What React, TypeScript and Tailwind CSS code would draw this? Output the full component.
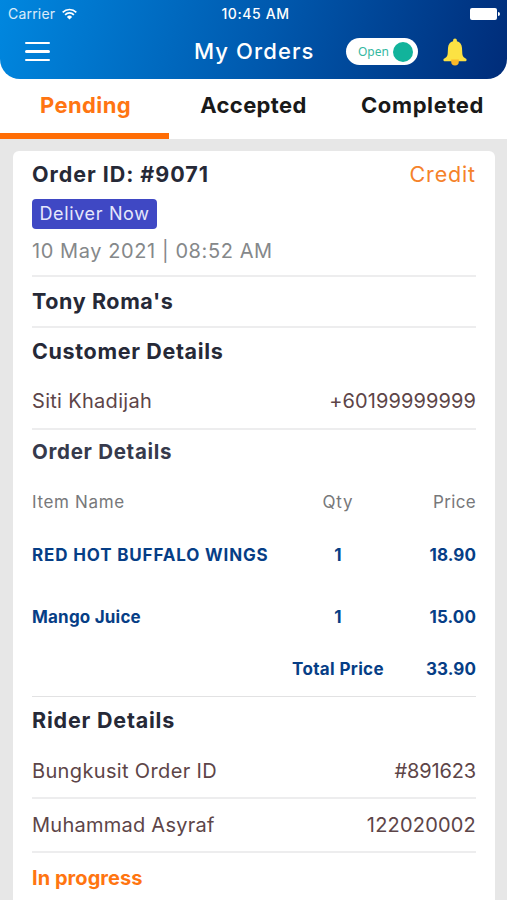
import { useState } from 'react'
import clsx from 'clsx'

interface OrderItem {
  name: string
  qty: number
  price: string
  nameClass: string
}

const TABS = [
  { label: 'Pending', tracking: 'tracking-[0.4px] pl-[2px]' },
  { label: 'Accepted', tracking: 'tracking-[0.35px]' },
  { label: 'Completed', tracking: 'tracking-[0.6px]' },
]

const ITEMS: OrderItem[] = [
  { name: 'RED HOT BUFFALO WINGS', qty: 1, price: '18.90', nameClass: 'tracking-[0.85px]' },
  { name: 'Mango Juice', qty: 1, price: '15.00', nameClass: 'tracking-[0.2px]' },
]

function StatusBar() {
  return (
    <div className="flex h-[27px] items-center justify-between pl-2 pr-[7px] text-[14px]">
      <div className="flex w-[163px] items-center gap-[7px]">
        <span className="tracking-[0.2px] text-white/85">Carrier</span>
        <svg width="15" height="12" viewBox="0 0 15 12" fill="none" stroke="white" strokeWidth="1.7">
          <path d="M0.7 4.3a9.6 9.6 0 0 1 13.6 0" />
          <path d="M3.1 6.8a6.2 6.2 0 0 1 8.8 0" />
          <path d="M7.5 11.6 4.9 8.9a3.7 3.7 0 0 1 5.2 0Z" fill="white" stroke="none" />
        </svg>
      </div>
      <span className="font-medium tracking-[0.6px]">10:45 AM</span>
      <div className="flex w-40 items-center justify-end gap-px">
        <div className="h-3 w-[27px] rounded-[2px] bg-white" />
        <div className="h-1 w-[2px] rounded-r-full bg-white" />
      </div>
    </div>
  )
}

function BellIcon() {
  return (
    <svg width="24" height="28" viewBox="0 0 24 28">
      <path
        d="M12 .5c-1.1 0-1.9.8-1.9 1.9v.9C7 4 5.2 6.6 5 10l-.3 5.5c-.1 2.2-1 3.7-2.6 4.6-1.1.6-1.7 1-1.7 1.8 0 .9.7 1.4 1.7 1.4h19.8c1 0 1.7-.5 1.7-1.4 0-.8-.6-1.2-1.7-1.8-1.6-.9-2.5-2.4-2.6-4.6L19 10c-.2-3.4-2-6-5.1-6.7v-.9C13.9 1.3 13.1.5 12 .5Z"
        fill="#fce243"
      />
      <path d="M8.2 21.5h7.6v2.2a3.8 3.8 0 0 1-7.6 0Z" fill="#fbb828" />
    </svg>
  )
}

function Header() {
  const [open, setOpen] = useState(true)

  return (
    <header className="h-[79px] rounded-b-[20px] bg-[linear-gradient(105deg,#0087df_0%,#0059ae_52%,#002c79_100%)] text-white">
      <StatusBar />
      <div className="flex h-[49px] items-center pl-[25px]">
        <button className="flex w-[25px] flex-col gap-[6px]" aria-label="Menu">
          <span className="h-[2.5px] rounded-full bg-white" />
          <span className="h-[2.5px] rounded-full bg-white" />
          <span className="h-[2.5px] rounded-full bg-white" />
        </button>
        <h1 className="ml-[144px] w-[152px] whitespace-nowrap text-[22px] font-medium tracking-[1.1px]">My Orders</h1>
        <button
          onClick={() => setOpen(!open)}
          className="flex h-[27px] w-[72px] items-center justify-between rounded-full bg-white pl-3 pr-[5px]"
        >
          <span className="font-['Noto_Sans',sans-serif] text-[12px] text-[#35b89f]">{open ? 'Open' : 'Closed'}</span>
          <span className="size-5 rounded-full bg-[#12b39b]" />
        </button>
        <button className="ml-[25px]" aria-label="Notifications">
          <BellIcon />
        </button>
      </div>
    </header>
  )
}

function Divider({ thin }: { thin?: boolean }) {
  return <div className={clsx('shrink-0', thin ? 'h-px bg-[#e2e2e3]' : 'h-[2px] bg-[#ededee]')} />
}

export default function App() {
  const [tab, setTab] = useState('Pending')

  return (
    <div className="h-[900px] w-[507px] overflow-hidden bg-[#e7e7e7] font-['Inter',sans-serif]">
      <div className="bg-white">
        <Header />
        <nav className="grid h-[60px] grid-cols-3">
          {TABS.map(({ label, tracking }) => (
            <button
              key={label}
              onClick={() => setTab(label)}
              className={clsx(
                'flex justify-center border-b-[6px] pt-[10px] text-[22px] leading-8 font-bold',
                tracking,
                tab === label ? 'border-[#ff6d05] text-[#ff7512]' : 'border-transparent text-[#191919]',
              )}
            >
              {label}
            </button>
          ))}
        </nav>
      </div>

      <main className="mr-3 ml-[13px] mt-3 h-[780px] rounded-md bg-white px-[19px] text-[20px] text-[#5d4548]">
        <div className="flex h-[46px] items-center justify-between">
          <h2 className="text-[21.5px] font-bold tracking-[0.95px] text-[#262937]">Order ID: #9071</h2>
          <span className="text-[21.5px] tracking-[0.85px] text-[#f5822a]">Credit</span>
        </div>
        <div className="mt-[2px] flex h-[30px] w-[125px] items-center justify-center rounded-[4px] bg-[#3f48c4] pb-px text-[18px] tracking-[0.65px] text-[#e6e7fb]">
          Deliver Now
        </div>
        <div className="flex h-[46px] items-center pb-[2px] text-[20px] tracking-[0.58px] text-[#85888a]">10 May 2021 | 08:52 AM</div>
        <Divider />
        <h2 className="flex h-[49px] items-center text-[21.5px] font-bold tracking-[0.6px] text-[#262937]">Tony Roma's</h2>
        <Divider />

        <h2 className="flex h-[47px] items-center text-[21.5px] font-bold tracking-[0.65px] text-[#262937]">Customer Details</h2>
        <div className="flex h-[53px] items-center justify-between pb-px">
          <span className="tracking-[0.3px]">Siti Khadijah</span>
          <span className="tracking-[0.1px]">+60199999999</span>
        </div>
        <Divider />

        <h2 className="flex h-[44px] items-center text-[20.5px] font-bold tracking-[0.7px] text-[#363a4c]">Order Details</h2>
        <div className="mt-[8px] flex h-[43px] items-center pb-px text-[17px] text-[#77787a]">
          <span className="flex-1 tracking-[0.65px]">Item Name</span>
          <span className="w-[60px] text-center tracking-[0.9px]">Qty</span>
          <span className="w-[108px] text-right tracking-[0.35px]">Price</span>
        </div>
        {ITEMS.map((item) => (
          <div key={item.name} className="flex h-[62px] items-center text-[17px] font-bold text-[#063e86]">
            <span className={clsx('flex-1 whitespace-nowrap', item.nameClass)}>{item.name}</span>
            <span className="w-[60px] text-center">{item.qty}</span>
            <span className="w-[108px] text-right tracking-[0.1px]">{item.price}</span>
          </div>
        ))}
        <div className="mb-[4px] flex h-[43px] items-center pb-px text-[17px] font-bold text-[#063e86]">
          <span className="flex-1 pr-[42px] text-right tracking-[0.35px]">Total Price</span>
          <span className="tracking-[0.1px]">33.90</span>
        </div>
        <Divider thin />

        <h2 className="flex h-[47px] items-center text-[21.5px] font-bold tracking-[0.8px] text-[#262937]">Rider Details</h2>
        <div className="flex h-[53px] items-center justify-between">
          <span className="tracking-[0.35px]">Bungkusit Order ID</span>
          <span className="tracking-[-0.15px]">#891623</span>
        </div>
        <Divider />
        <div className="flex h-[52px] items-center justify-between">
          <span className="tracking-[0.25px]">Muhammad Asyraf</span>
          <span className="tracking-[0.2px]">122020002</span>
        </div>
        <Divider />
        <div className="flex h-[50px] items-center font-bold tracking-[0.05px] text-[#ff7510]">In progress</div>
      </main>
    </div>
  )
}
